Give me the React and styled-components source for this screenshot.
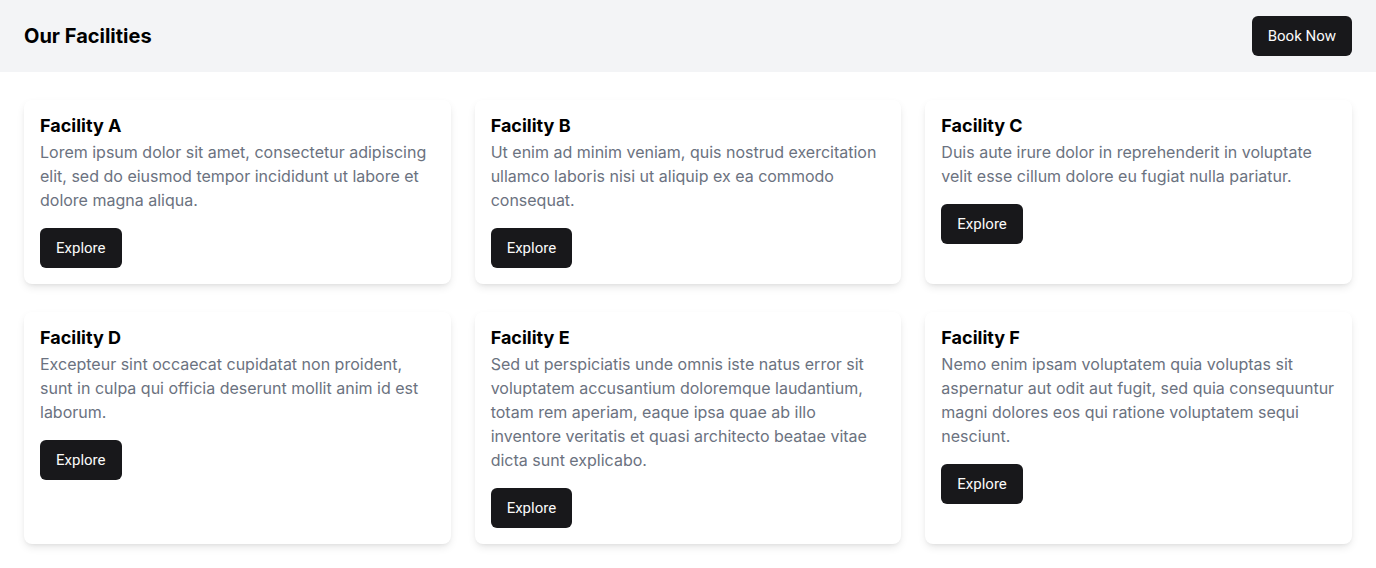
import React from "react";
import styled, { createGlobalStyle } from "styled-components";

const GlobalStyle = createGlobalStyle`
  *, *::before, *::after { box-sizing: border-box; }
  html, body { margin: 0; padding: 0; background: #ffffff; }
  body {
    font-family: Inter, "Noto Sans", Arial, sans-serif;
    color: #000000;
    -webkit-font-smoothing: antialiased;
  }
`;

const Page = styled.div`
  min-height: 568px;
  background: #ffffff;
`;

const Header = styled.header`
  height: 72px;
  background: #f3f4f6;
  display: flex;
  align-items: center;
  justify-content: space-between;
  padding: 0 24px;
`;

const Title = styled.h1`
  margin: 0;
  font-size: 20px;
  line-height: 28px;
  font-weight: 700;
  color: #000000;
`;

const DarkButton = styled.button`
  height: 40px;
  padding: 0 16px;
  border: none;
  border-radius: 6px;
  background: #18181b;
  color: #fafafa;
  font-family: Roboto, Arial, sans-serif;
  font-size: 15px;
  font-weight: 400;
  line-height: 20px;
  cursor: pointer;
  align-self: ${(p) => (p.$start ? "flex-start" : "auto")};
  margin-top: ${(p) => (p.$start ? "16px" : "0")};
`;

const Grid = styled.main`
  display: grid;
  grid-template-columns: repeat(3, 1fr);
  column-gap: 24px;
  row-gap: 28px;
  padding: 28px 24px 24px;
`;

const Card = styled.article`
  background: #ffffff;
  border-radius: 8px;
  padding: 16px;
  display: flex;
  flex-direction: column;
  box-shadow: 0 4px 8px -1px rgba(0, 0, 0, 0.1), 0 2px 4px -2px rgba(0, 0, 0, 0.08);
`;

const CardTitle = styled.h2`
  margin: 0 0 4px;
  font-size: 18px;
  line-height: 20px;
  font-weight: 700;
  color: #000000;
`;

const CardText = styled.p`
  margin: 0;
  font-size: 16px;
  line-height: 24px;
  color: #6b7280;
`;

const facilities = [
  {
    name: "Facility A",
    text: "Lorem ipsum dolor sit amet, consectetur adipiscing elit, sed do eiusmod tempor incididunt ut labore et dolore magna aliqua.",
  },
  {
    name: "Facility B",
    text: "Ut enim ad minim veniam, quis nostrud exercitation ullamco laboris nisi ut aliquip ex ea commodo consequat.",
  },
  {
    name: "Facility C",
    text: "Duis aute irure dolor in reprehenderit in voluptate velit esse cillum dolore eu fugiat nulla pariatur.",
  },
  {
    name: "Facility D",
    text: "Excepteur sint occaecat cupidatat non proident, sunt in culpa qui officia deserunt mollit anim id est laborum.",
  },
  {
    name: "Facility E",
    text: "Sed ut perspiciatis unde omnis iste natus error sit voluptatem accusantium doloremque laudantium, totam rem aperiam, eaque ipsa quae ab illo inventore veritatis et quasi architecto beatae vitae dicta sunt explicabo.",
  },
  {
    name: "Facility F",
    text: "Nemo enim ipsam voluptatem quia voluptas sit aspernatur aut odit aut fugit, sed quia consequuntur magni dolores eos qui ratione voluptatem sequi nesciunt.",
  },
];

export default function App() {
  return (
    <Page>
      <GlobalStyle />
      <Header>
        <Title>Our Facilities</Title>
        <DarkButton>Book Now</DarkButton>
      </Header>
      <Grid>
        {facilities.map((f) => (
          <Card key={f.name}>
            <CardTitle>{f.name}</CardTitle>
            <CardText>{f.text}</CardText>
            <DarkButton $start>Explore</DarkButton>
          </Card>
        ))}
      </Grid>
    </Page>
  );
}
